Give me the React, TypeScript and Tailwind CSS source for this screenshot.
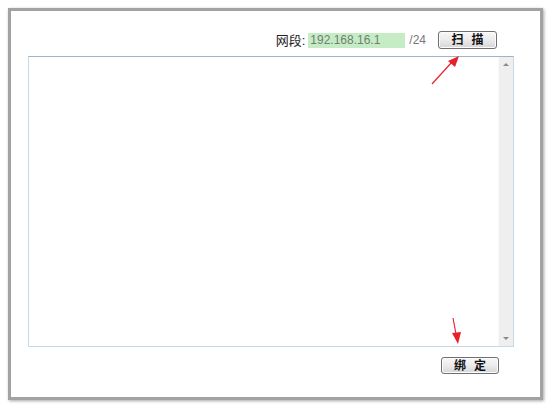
export default function App() {
  const cjk = { fontFamily: '"Liberation Sans", "Noto Sans CJK SC", sans-serif' };

  return (
    <div className="relative w-[550px] h-[406px] bg-white" style={cjk}>
      <div className="pt-[8px] pl-[8px]">
        <div className="w-[535px] h-[392px] border-[3px] border-[#a2a2a2] bg-white shadow-[1px_1px_3px_rgba(0,0,0,0.35)] flex flex-col">
          {/* top row */}
          <div className="flex justify-end items-center pt-[20px] pr-[43px] h-[38px] text-[12px]">
            <span className="text-[#222] text-[13px] mr-[3px] leading-none">网段:</span>
            <div className="w-[97px] h-[15px] bg-[#c6ecc6] text-[#6f7f6f] text-[12px] leading-[15px] pl-[2px]">
              192.168.16.1
            </div>
            <span className="text-[#777] ml-[4px] mr-[12px] leading-none">/24</span>
            <button className="w-[59px] h-[18px] rounded-[3px] border border-[#707070] bg-gradient-to-b from-[#f8f8f8] via-[#ebebeb] to-[#d6d6d6] text-[12px] font-bold text-[#111] leading-none tracking-[8px] pl-[8px] shadow-[inset_0_0_0_1px_#fcfcfc]">
              扫描
            </button>
          </div>

          {/* textarea */}
          <div className="ml-[17px] mt-[7px] w-[486px] h-[291px] border border-[#c8d8e4] border-t-[#9cb6c9] flex">
            <div className="flex-1" />
            <div className="w-[15px] bg-[#efefef] border-l border-[#f8f8f8] flex flex-col items-center justify-between py-[6px]">
              <div className="w-0 h-0 border-l-[3px] border-r-[3px] border-b-[3px] border-l-transparent border-r-transparent border-b-[#8a8a8a]" />
              <div className="w-0 h-0 border-l-[3px] border-r-[3px] border-t-[3px] border-l-transparent border-r-transparent border-t-[#8a8a8a]" />
            </div>
          </div>

          {/* bottom button */}
          <div className="flex justify-end pr-[41px] mt-[10px]">
            <button className="w-[58px] h-[17px] rounded-[3px] border border-[#707070] bg-gradient-to-b from-[#f8f8f8] via-[#ebebeb] to-[#d6d6d6] text-[12px] font-bold text-[#111] leading-none tracking-[8px] pl-[8px] shadow-[inset_0_0_0_1px_#fcfcfc]">
              绑定
            </button>
          </div>
        </div>
      </div>

      {/* red annotation arrows */}
      <svg className="absolute left-0 top-0 pointer-events-none" width="550" height="406">
        <line x1="432" y1="84" x2="452" y2="62" stroke="#e8202a" strokeWidth="1.2" />
        <polygon points="459,56 448,61 455,67" fill="#e8202a" />
        <line x1="453" y1="318" x2="456" y2="334" stroke="#e8202a" strokeWidth="1.2" />
        <polygon points="458,344 452,333 461,332" fill="#e8202a" />
      </svg>
    </div>
  );
}
